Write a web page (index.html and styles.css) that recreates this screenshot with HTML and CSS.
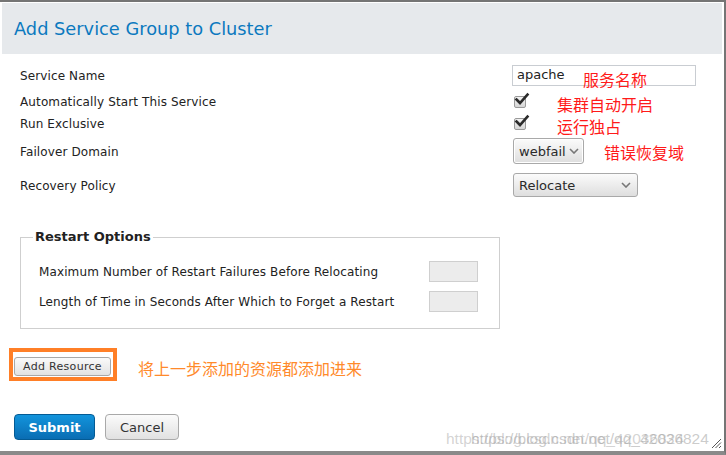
FILE: index.html
```html
<!DOCTYPE html>
<html>
<head>
<meta charset="utf-8">
<link rel="stylesheet" href="styles.css">
</head>
<body>
<div class="window">
  <div class="header"><h1 class="title">Add Service Group to Cluster</h1></div>

  <div class="form">
    <div class="row r1">
      <div class="label">Service Name</div>
      <div class="control">
        <div class="text-input">apache</div>
        <span class="note note-red n1">服务名称</span>
      </div>
    </div>
    <div class="row r2">
      <div class="label">Automatically Start This Service</div>
      <div class="control">
        <span class="checkbox"><svg width="16" height="16" viewBox="0 0 16 16"><path d="M2.5 7.5 L6 11 L13.5 2.5" fill="none" stroke="#2b2b2b" stroke-width="2.6" stroke-linecap="square" stroke-linejoin="miter"/></svg></span>
        <span class="note note-red n2">集群自动开启</span>
      </div>
    </div>
    <div class="row r3">
      <div class="label">Run Exclusive</div>
      <div class="control">
        <span class="checkbox"><svg width="16" height="16" viewBox="0 0 16 16"><path d="M2.5 7.5 L6 11 L13.5 2.5" fill="none" stroke="#2b2b2b" stroke-width="2.6" stroke-linecap="square" stroke-linejoin="miter"/></svg></span>
        <span class="note note-red n3">运行独占</span>
      </div>
    </div>
    <div class="row r4">
      <div class="label">Failover Domain</div>
      <div class="control">
        <div class="select sel-small"><span>webfail</span><svg width="10" height="6" viewBox="0 0 10 6"><path d="M1 1 L5 5 L9 1" fill="none" stroke="#777" stroke-width="1.6"/></svg></div>
        <span class="note note-red n4">错误恢复域</span>
      </div>
    </div>
    <div class="row r5">
      <div class="label">Recovery Policy</div>
      <div class="control">
        <div class="select sel-wide"><span>Relocate</span><svg width="10" height="6" viewBox="0 0 10 6"><path d="M1 1 L5 5 L9 1" fill="none" stroke="#777" stroke-width="1.6"/></svg></div>
      </div>
    </div>

    <fieldset class="restart">
      <legend>Restart Options</legend>
      <div class="frow f1">
        <div class="flabel">Maximum Number of Restart Failures Before Relocating</div>
        <div class="small-input"></div>
      </div>
      <div class="frow f2">
        <div class="flabel">Length of Time in Seconds After Which to Forget a Restart</div>
        <div class="small-input"></div>
      </div>
    </fieldset>

    <div class="resource-row">
      <div class="highlight"><button class="btn-add">Add Resource</button></div>
      <span class="note note-orange">将上一步添加的资源都添加进来</span>
    </div>

    <div class="actions">
      <button class="btn-submit">Submit</button>
      <button class="btn-cancel">Cancel</button>
    </div>
  </div>

  <div class="watermark"><span class="wm1">https://blog.csdn.net/qq_42036824</span><span class="wm2">https://blog.csdn.net/qq_42036824</span></div>
  <svg class="grip" width="11" height="11" viewBox="0 0 11 11"><path d="M10 1 L1 10 M10 4.5 L4.5 10 M10 8 L8 10" stroke="#555" stroke-width="1"/></svg>
</div>
</body>
</html>
```

FILE: styles.css
```css
html, body {
  margin: 0;
  padding: 0;
  background: #fff;
}
body {
  width: 726px;
  height: 455px;
  overflow: hidden;
  font-family: "DejaVu Sans", "Noto Sans CJK SC", sans-serif;
  color: #222;
}
.window {
  box-sizing: border-box;
  width: 726px;
  height: 455px;
  border-top: 2px solid #757575;
  border-right: 2px solid #757575;
  border-bottom: 4px solid #8a8a8a;
  position: relative;
  background: #fff;
}
.header {
  margin: 1px 2px 0 2px;
  height: 51px;
  background: #e6e9ec;
  display: flex;
  align-items: center;
  padding-left: 12px;
}
.title {
  margin: 0;
  font-size: 17.8px;
  font-weight: normal;
  color: #0b79bf;
}
.form {
  display: flex;
  flex-direction: column;
}
.row {
  display: flex;
  align-items: center;
  padding-left: 20px;
  font-size: 12px;
  letter-spacing: 0.12px;
}
.label {
  width: 492px;
  color: #222;
  padding-top: 1px;
}
.control {
  position: relative;
  display: flex;
  align-items: center;
  height: 100%;
  letter-spacing: 0;
}
.r1 { margin-top: 10px; height: 22px; }
.r2 { margin-top: 4px; height: 22px; }
.r3 { height: 22px; }
.r4 { margin-top: 4px; height: 26px; }
.r5 { margin-top: 9px; height: 24px; }

.text-input {
  box-sizing: border-box;
  width: 184px;
  height: 21px;
  border: 1px solid #c9cdd2;
  font-size: 13px;
  line-height: 18px;
  padding-left: 4px;
  color: #222;
  background: #fff;
}
.checkbox {
  position: relative;
  box-sizing: border-box;
  width: 12px;
  height: 12px;
  margin-left: 2px;
  margin-top: 2px;
  border: 1px solid #9a9a9a;
  border-radius: 2px;
  background: linear-gradient(#f4f4f4, #d6d6d6);
}
.checkbox svg {
  position: absolute;
  left: -1px;
  top: -5px;
}
.select {
  box-sizing: border-box;
  display: flex;
  align-items: center;
  justify-content: space-between;
  margin-left: 1px;
  border: 1px solid #a9a9a9;
  border-radius: 3px;
  background: linear-gradient(#fbfbfb, #dedede);
  font-size: 13px;
  color: #2a2a2a;
}
.sel-small {
  width: 71px;
  height: 26px;
  padding: 0 4px 0 5px;
  box-shadow: inset 0 0 0 1px #fff;
}
.sel-wide {
  width: 125px;
  height: 24px;
  padding: 0 6px 0 5px;
}

.note {
  position: absolute;
  white-space: nowrap;
  font-family: "Noto Sans CJK SC", sans-serif;
  font-size: 16px;
  line-height: 16px;
}
.note-red { color: #ff1a1a; }
.n1 { left: 71px; top: 7px; }
.n2 { left: 45px; top: 6px; }
.n3 { left: 45px; top: 6px; }
.n4 { left: 92px; top: 6px; }

.restart {
  margin: 32px 0 0 20px;
  width: 480px;
  box-sizing: border-box;
  padding: 0 0 16px 12px;
  border: 1px solid #cfcfcf;
}
.restart legend {
  padding: 0 2px;
  font-size: 13px;
  line-height: 16px;
  font-weight: bold;
  color: #222;
}
.frow {
  display: flex;
  align-items: center;
  margin-left: 6px;
  font-size: 12px;
  letter-spacing: 0.12px;
  height: 21px;
}
.f1 { margin-top: 16px; }
.f2 { margin-top: 9px; }
.flabel { width: 390px; padding-top: 1px; }
.small-input {
  box-sizing: border-box;
  width: 49px;
  height: 21px;
  border: 1px solid #cfcfcf;
  background: #ececec;
}

.resource-row {
  display: flex;
  align-items: center;
  margin: 19px 0 0 9px;
}
.highlight {
  border: 4px solid #ff7f27;
  padding: 5px 2px 1px 1px;
  width: 97px;
}
.btn-add {
  display: block;
  box-sizing: border-box;
  width: 97px;
  height: 19px;
  border: 1px solid #a8a8a8;
  border-radius: 3px;
  background: linear-gradient(#fafafa, #e2e2e2);
  font-family: "DejaVu Sans", sans-serif;
  font-size: 11px;
  color: #333;
  padding: 0;
  letter-spacing: 0.3px;
}
.note-orange {
  position: static;
  margin-left: 21px;
  margin-top: 6px;
  color: #ff8a2b;
  font-size: 16px;
}

.actions {
  display: flex;
  gap: 10px;
  margin: 33px 0 0 14px;
}
.actions button {
  box-sizing: border-box;
  height: 26px;
  border-radius: 4px;
  font-family: "DejaVu Sans", sans-serif;
  font-size: 13px;
  padding: 0;
}
.btn-submit {
  width: 81px;
  border: 1px solid #045b94;
  background: linear-gradient(#1294dc, #0a6db3);
  color: #fff;
  font-weight: bold;
}
.btn-cancel {
  width: 74px;
  border: 1px solid #a9a9a9;
  background: linear-gradient(#fbfbfb, #e1e1e1);
  color: #333;
}

.watermark {
  position: absolute;
  left: 446px;
  top: 428px;
  width: 278px;
  height: 18px;
  font-family: "Liberation Sans", sans-serif;
  font-size: 15.5px;
  line-height: 18px;
  color: rgba(175, 175, 175, 0.55);
  white-space: nowrap;
  overflow: hidden;
}
.watermark span { position: absolute; top: 0; }
.wm1 { left: 0; }
.wm2 { left: 25px; color: rgba(160, 160, 160, 0.55); }
.grip {
  position: absolute;
  right: 2px;
  bottom: 2px;
}
```
